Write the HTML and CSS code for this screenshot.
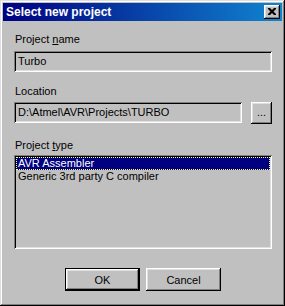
FILE: index.html
```html
<!DOCTYPE html>
<html>
<head>
    <meta charset="utf-8">
    <link rel="stylesheet" href="styles.css">
</head>
<body>
    <div class="win">
        <div class="title">
            <span class="title-text">Select new project</span>
            <div class="closebtn">
                <svg width="8" height="7" viewBox="0 0 8 7"><path d="M0 0h2l2 2 2-2h2v1l-2.5 2.5L8 6v1H6L4 5 2 7H0V6l2.5-2.5L0 1z" fill="#000"/></svg>
            </div>
        </div>
        <div class="content">
            <div class="lbl lbl1">Project <u>n</u>ame</div>
            <div class="field">Turbo</div>

            <div class="lbl lbl2">Location</div>
            <div class="locrow">
                <div class="field loc">D:\Atmel\AVR\Projects\TURBO</div>
                <div class="btn browse">...</div>
            </div>

            <div class="lbl lbl3">Project <u>t</u>ype</div>
            <div class="list">
                <div class="item sel">AVR Assembler</div>
                <div class="item">Generic 3rd party C compiler</div>
            </div>

            <div class="btnrow">
                <div class="deflt"><div class="btn okbtn">OK</div></div>
                <div class="btn cancel">Cancel</div>
            </div>
        </div>
    </div>
</body>
</html>
```

FILE: styles.css
```css
html, body {
    margin: 0;
    padding: 0;
    background: #c0c0c0;
}
.win {
    width: 285px;
    height: 306px;
    box-sizing: border-box;
    padding: 3px;
    background: #c0c0c0;
    box-shadow: inset -1px -1px #000, inset 1px 1px #dfdfdf, inset -2px -2px #808080, inset 2px 2px #fff;
    font-family: "Liberation Sans", Arial, sans-serif;
    font-size: 11px;
    color: #000;
}
.title {
    height: 18px;
    display: flex;
    align-items: center;
    justify-content: space-between;
    background: linear-gradient(to right, #000080, #1084d0);
    padding: 0 2px 0 3px;
}
.title-text {
    color: #fff;
    font-weight: bold;
    font-size: 12px;
    line-height: 18px;
}
.closebtn {
    width: 16px;
    height: 14px;
    background: #c0c0c0;
    box-shadow: inset -1px -1px #000, inset 1px 1px #fff, inset -2px -2px #808080, inset 2px 2px #dfdfdf;
    display: flex;
    align-items: center;
    justify-content: center;
}
.closebtn svg {
    display: block;
    margin: 0 0 1px 0;
}
.content {
    padding: 0 10px 0 11px;
}
.lbl {
    line-height: 13px;
    padding-left: 1px;
}
.lbl1 { margin-top: 12px; margin-bottom: 5px; }
.lbl2 { margin-top: 13px; margin-bottom: 4px; }
.lbl3 { margin-top: 15px; margin-bottom: 3px; }
.field {
    height: 21px;
    box-sizing: border-box;
    padding: 0 4px;
    line-height: 21px;
    background: #c0c0c0;
    box-shadow: inset 1px 1px #808080, inset -1px -1px #fff, inset 2px 2px #000, inset -2px -2px #dfdfdf;
    white-space: nowrap;
}
.locrow {
    display: flex;
    align-items: flex-start;
    gap: 9px;
}
.loc {
    flex: 1;
}
.btn {
    background: #c0c0c0;
    box-shadow: inset -1px -1px #000, inset 1px 1px #fff, inset -2px -2px #808080, inset 2px 2px #dfdfdf;
    display: flex;
    align-items: center;
    justify-content: center;
    box-sizing: border-box;
}
.browse {
    width: 21px;
    height: 22px;
    padding-bottom: 2px;
}
.list {
    height: 94px;
    box-sizing: border-box;
    padding: 2px;
    background: #c0c0c0;
    box-shadow: inset 1px 1px #808080, inset -1px -1px #fff, inset 2px 2px #000, inset -2px -2px #dfdfdf;
}
.item {
    height: 13px;
    line-height: 13px;
    padding-left: 2px;
    box-sizing: border-box;
}
.sel {
    background: #000080;
    color: #fff;
    outline: 1px dotted #ffff80;
    outline-offset: -1px;
}
.btnrow {
    margin-top: 19px;
    display: flex;
    justify-content: center;
    gap: 6px;
}
.deflt {
    width: 75px;
    height: 23px;
    box-sizing: border-box;
    border: 1px solid #000;
}
.okbtn {
    width: 73px;
    height: 21px;
}
.cancel {
    width: 75px;
    height: 23px;
}
```
